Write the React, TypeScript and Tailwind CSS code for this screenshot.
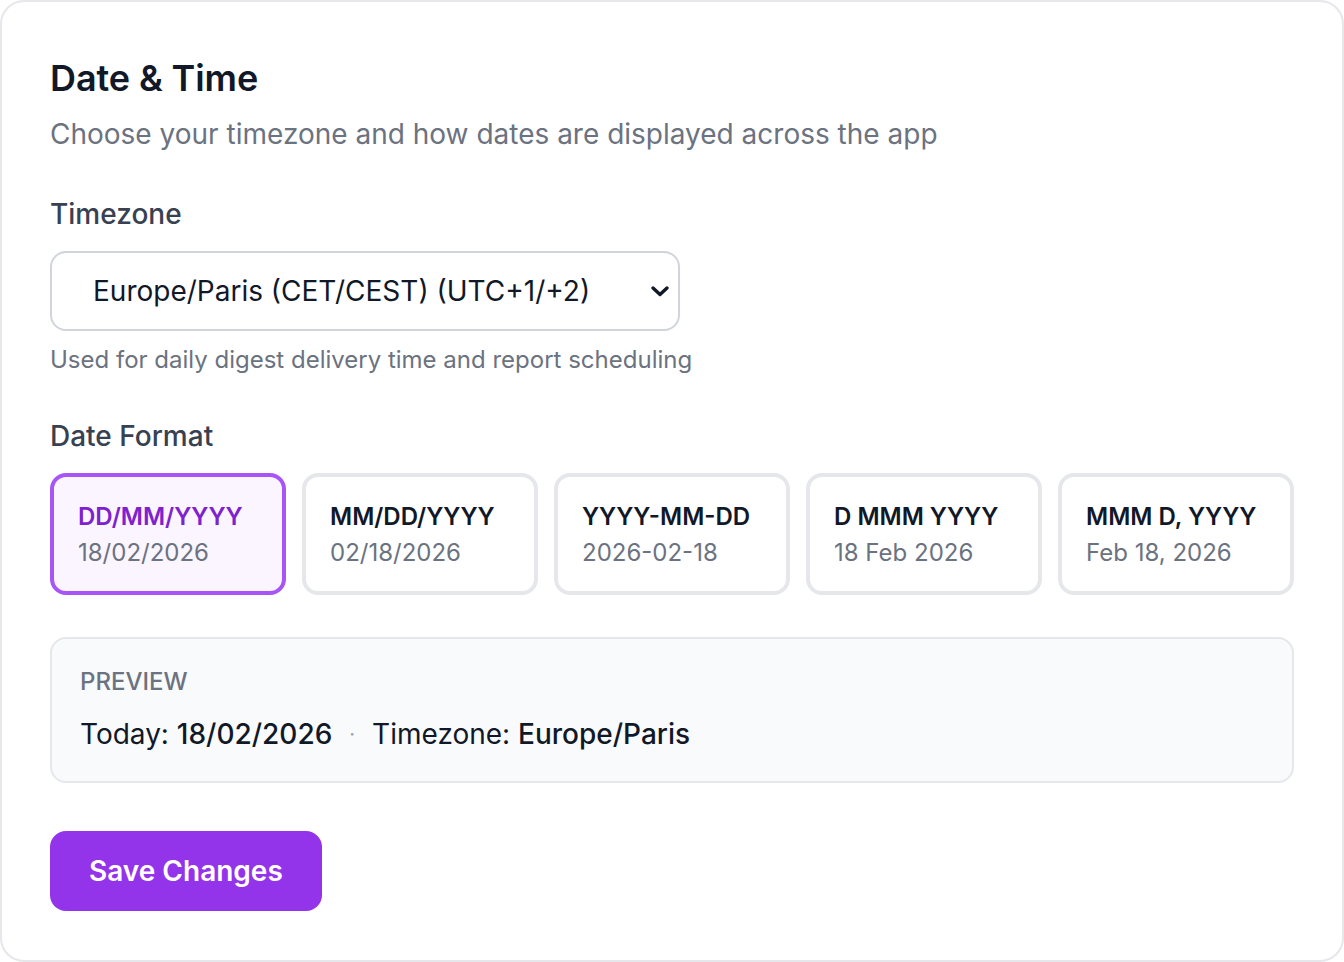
import { useState } from "react"

const formats = [
  { id: "dmy", label: "DD/MM/YYYY", example: "18/02/2026" },
  { id: "mdy", label: "MM/DD/YYYY", example: "02/18/2026" },
  { id: "iso", label: "YYYY-MM-DD", example: "2026-02-18" },
  { id: "long", label: "D MMM YYYY", example: "18 Feb 2026" },
  { id: "us", label: "MMM D, YYYY", example: "Feb 18, 2026" },
]

export default function App() {
  const [selected, setSelected] = useState("dmy")
  const current = formats.find((f) => f.id === selected)!

  return (
    <div className="min-h-screen bg-white font-['Inter',sans-serif]">
      <div className="h-[962px] border-2 border-[#e5e7eb] rounded-[24px] bg-white px-[48px] pt-[48px]">
        {/* Header */}
        <h1 className="text-[36px] leading-[56px] font-semibold text-[#111827] tracking-[-0.1px]">Date &amp; Time</h1>
        <p className="mt-[8px] text-[28px] leading-[40px] text-[#6b7280]">
          Choose your timezone and how dates are displayed across the app
        </p>

        {/* Timezone */}
        <label className="block mt-[40px] text-[28px] leading-[40px] font-medium text-[#374151]">Timezone</label>
        <div className="mt-[17px] w-[630px] h-[80px] border-2 border-[#d1d5db] rounded-[16px] bg-white flex items-center justify-between pl-[41px] pr-[7px]">
          <span className="text-[28px] text-[#111827]">Europe/Paris (CET/CEST) (UTC+1/+2)</span>
          <svg width="22" height="14" viewBox="0 0 22 14" fill="none">
            <path d="M4 4l7 6.5 7-6.5" stroke="#111827" strokeWidth="3.4" strokeLinecap="round" strokeLinejoin="round" />
          </svg>
        </div>
        <p className="mt-[13px] text-[24px] leading-[32px] text-[#6b7280]">
          Used for daily digest delivery time and report scheduling
        </p>

        {/* Date Format */}
        <label className="block mt-[40px] text-[28px] leading-[40px] font-medium text-[#374151]">Date Format</label>
        <div className="mt-[17px] grid grid-cols-5 gap-[16px]">
          {formats.map((f) => {
            const active = f.id === selected
            return (
              <button
                key={f.id}
                onClick={() => setSelected(f.id)}
                className={`text-left rounded-[16px] border-[4px] px-[24px] pt-[24px] pb-[22px] ${
                  active ? "border-[#a855f7] bg-[#faf5ff]" : "border-[#e5e7eb] bg-white"
                }`}
              >
                <div className={`text-[24px] leading-[32px] font-semibold ${active ? "text-[#7e22ce]" : "text-[#111827]"}`}>
                  {f.label}
                </div>
                <div className="mt-[4px] text-[24px] leading-[32px] text-[#6b7280]">{f.example}</div>
              </button>
            )
          })}
        </div>

        {/* Preview */}
        <div className="mt-[42px] border-2 border-[#e5e7eb] rounded-[16px] bg-[#f9fafb] px-[28px] pt-[27px] pb-[27px]">
          <div className="text-[24px] leading-[32px] font-medium text-[#6b7280] uppercase">Preview</div>
          <div className="mt-[16px] text-[28px] leading-[40px] text-[#111827] flex items-center">
            <span>
              Today: <span className="font-medium">{current.example}</span>
            </span>
            <span className="mx-[17px] text-[#9ca3af] text-[20px]">·</span>
            <span>
              Timezone: <span className="font-medium">Europe/Paris</span>
            </span>
          </div>
        </div>

        {/* Save */}
        <button className="mt-[48px] h-[80px] px-[39px] rounded-[16px] bg-[#9333ea] text-white text-[28px] font-semibold">
          Save Changes
        </button>
      </div>
    </div>
  )
}
